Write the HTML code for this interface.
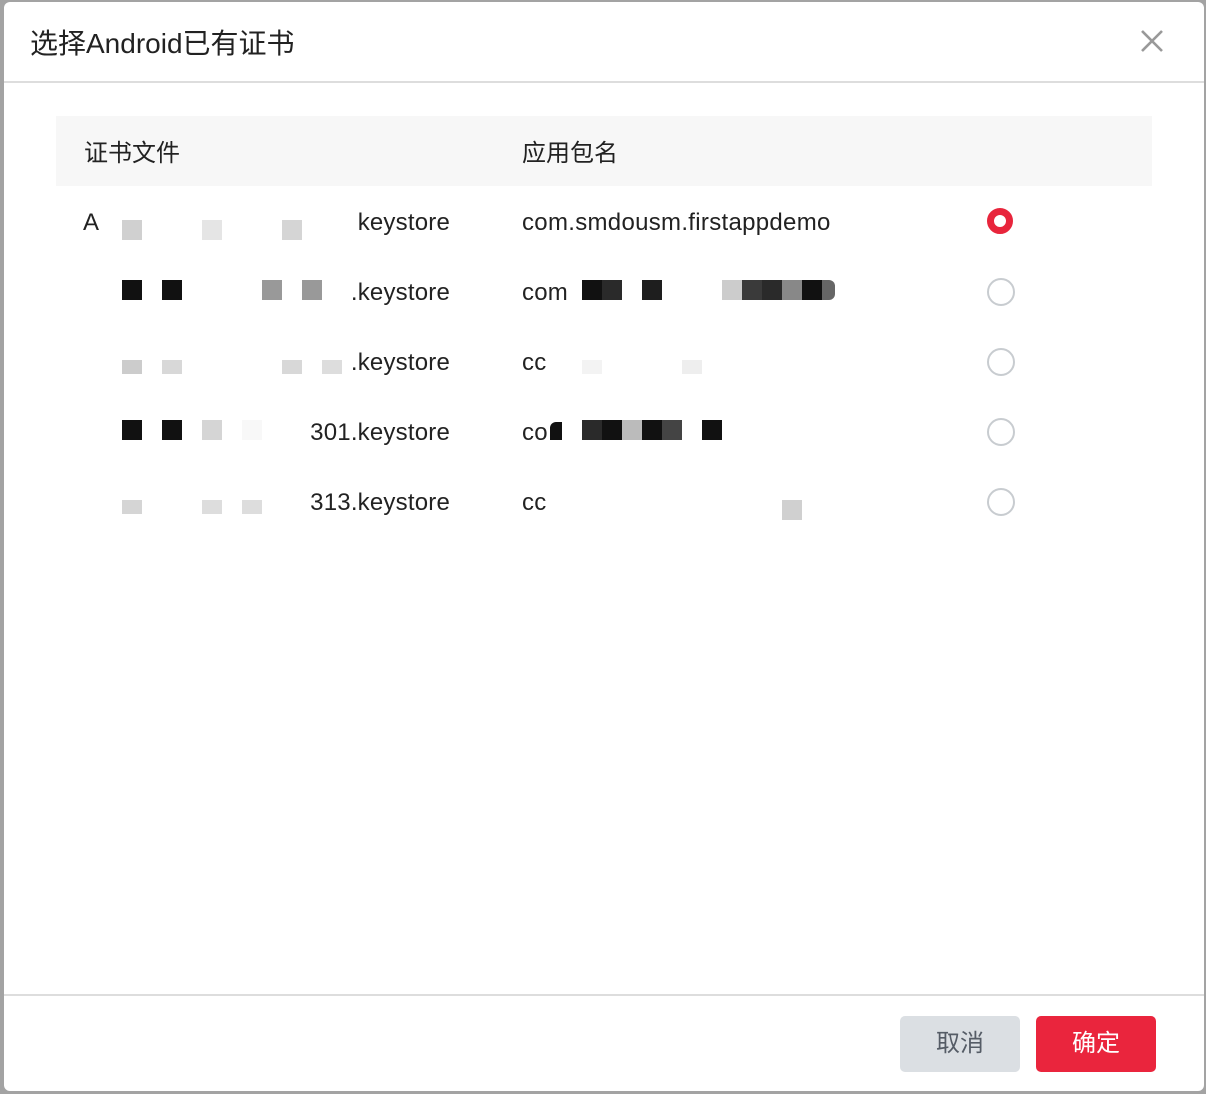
<!DOCTYPE html>
<html><head><meta charset="utf-8"><style>
body{margin:0;width:1206px;height:1094px;background:#a3a3a3;position:relative;overflow:hidden;font-family:"Liberation Sans","Noto Sans CJK SC",sans-serif;}
.dlg{position:absolute;left:4px;top:2px;width:1200px;height:1089px;background:#fff;border-radius:6px;}
.t{position:absolute;color:#222;font-size:24px;white-space:nowrap;letter-spacing:0.2px}
.k{position:absolute;right:756px;color:#222;font-size:24px;white-space:nowrap;letter-spacing:0.2px}
.b{position:absolute;width:20px;height:20px}
.r{position:absolute;left:987px;width:24px;height:24px;border:2px solid #c8ccd0;border-radius:50%}
</style></head><body>
<div class="dlg"></div>
<div class="t" style="left:30px;top:22px;font-size:28px;letter-spacing:0">选择Android已有证书</div>
<svg style="position:absolute;left:1140px;top:29px" width="24" height="24"><path d="M2 2L22 22M22 2L2 22" stroke="#999" stroke-width="2.6"/></svg>
<div style="position:absolute;left:4px;top:81px;width:1200px;height:2px;background:#ddd"></div>
<div style="position:absolute;left:56px;top:116px;width:1096px;height:70px;background:#f7f7f7"></div>
<div class="t" style="left:84px;top:133px;letter-spacing:0">证书文件</div>
<div class="t" style="left:522px;top:133px;letter-spacing:0">应用包名</div>

<div class="t" style="left:83px;top:209px">A</div>
<div class="k" style="top:209px">keystore</div>
<div class="t" style="left:522px;top:209px;letter-spacing:0.3px">com.smdousm.firstappdemo</div>
<div class="k" style="top:279px">.keystore</div>
<div class="t" style="left:522px;top:279px">com</div>
<div class="k" style="top:349px">.keystore</div>
<div class="t" style="left:522px;top:349px">cc</div>
<div class="k" style="top:419px">301.keystore</div>
<div class="t" style="left:522px;top:419px">co</div>
<div class="k" style="top:489px">313.keystore</div>
<div class="t" style="left:522px;top:489px">cc</div>

<div class="b" style="left:122px;top:220px;background:#d0d0d0"></div>
<div class="b" style="left:202px;top:220px;background:#e5e5e5"></div>
<div class="b" style="left:282px;top:220px;background:#d5d5d5"></div>

<div class="b" style="left:122px;top:280px;background:#111"></div>
<div class="b" style="left:162px;top:280px;background:#111"></div>
<div class="b" style="left:262px;top:280px;background:#999"></div>
<div class="b" style="left:302px;top:280px;background:#999"></div>
<div class="b" style="left:582px;top:280px;background:#111"></div>
<div class="b" style="left:602px;top:280px;background:#2a2a2a"></div>
<div class="b" style="left:642px;top:280px;background:#1e1e1e"></div>
<div class="b" style="left:722px;top:280px;background:#ccc"></div>
<div class="b" style="left:742px;top:280px;background:#3a3a3a"></div>
<div class="b" style="left:762px;top:280px;background:#2a2a2a"></div>
<div class="b" style="left:782px;top:280px;background:#888"></div>
<div class="b" style="left:802px;top:280px;background:#111"></div>
<div class="b" style="left:822px;top:280px;width:13px;background:#666;border-radius:0 6px 6px 0"></div>

<div class="b" style="left:122px;top:360px;height:14px;background:#ccc"></div>
<div class="b" style="left:162px;top:360px;height:14px;background:#d8d8d8"></div>
<div class="b" style="left:282px;top:360px;height:14px;background:#d8d8d8"></div>
<div class="b" style="left:322px;top:360px;height:14px;background:#ddd"></div>
<div class="b" style="left:582px;top:360px;height:14px;background:#f3f3f3"></div>
<div class="b" style="left:682px;top:360px;height:14px;background:#eee"></div>

<div class="b" style="left:122px;top:420px;background:#111"></div>
<div class="b" style="left:162px;top:420px;background:#111"></div>
<div class="b" style="left:202px;top:420px;background:#d5d5d5"></div>
<div class="b" style="left:242px;top:420px;background:#f8f8f8"></div>
<div class="b" style="left:550px;top:422px;width:12px;height:18px;background:#111;border-radius:6px 0 0 0"></div>
<div class="b" style="left:582px;top:420px;background:#2a2a2a"></div>
<div class="b" style="left:602px;top:420px;background:#111"></div>
<div class="b" style="left:622px;top:420px;background:#bbb"></div>
<div class="b" style="left:642px;top:420px;background:#111"></div>
<div class="b" style="left:662px;top:420px;background:#444"></div>
<div class="b" style="left:702px;top:420px;background:#111"></div>

<div class="b" style="left:122px;top:500px;height:14px;background:#d5d5d5"></div>
<div class="b" style="left:202px;top:500px;height:14px;background:#ddd"></div>
<div class="b" style="left:242px;top:500px;height:14px;background:#ddd"></div>
<div class="b" style="left:782px;top:500px;background:#d0d0d0"></div>

<div class="r" style="top:208px;border:7px solid #e8253c;width:12px;height:12px"></div>
<div class="r" style="top:278px"></div>
<div class="r" style="top:348px"></div>
<div class="r" style="top:418px"></div>
<div class="r" style="top:488px"></div>

<div style="position:absolute;left:4px;top:994px;width:1200px;height:2px;background:#ddd"></div>
<div style="position:absolute;left:900px;top:1016px;width:120px;height:56px;background:#dbdfe3;border-radius:5px;color:#555c66;font-size:24px;text-align:center;line-height:56px">取消</div>
<div style="position:absolute;left:1036px;top:1016px;width:120px;height:56px;background:#ea253d;border-radius:5px;color:#fff;font-size:24px;text-align:center;line-height:56px">确定</div>
</body></html>
